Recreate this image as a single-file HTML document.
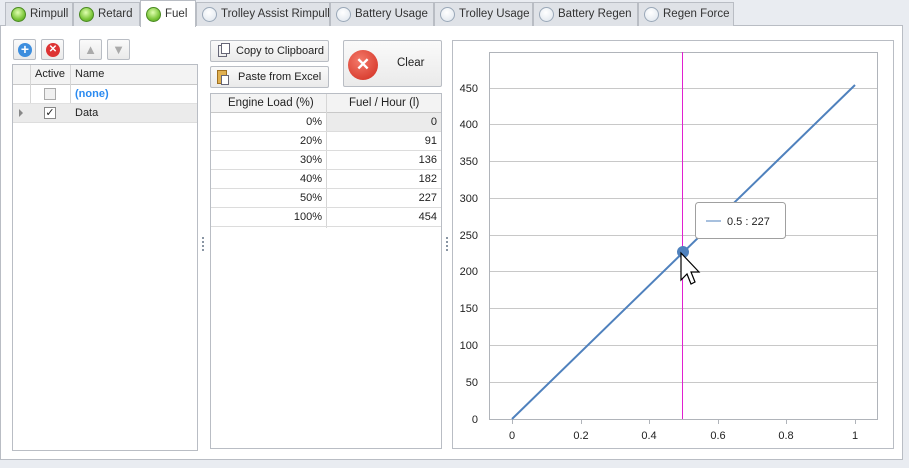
<!DOCTYPE html>
<html><head><style>
body{margin:0;width:909px;height:468px;background:#e9ecf1;font-family:"Liberation Sans",sans-serif;font-size:11px;color:#222;position:relative;overflow:hidden}
.a{position:absolute;box-sizing:border-box;white-space:nowrap}
.tab{position:absolute;top:2px;height:24px;background:#dfe2e7;border:1px solid #b9bdc4;border-bottom:none;line-height:23px;padding-left:24px;font-size:11.5px;color:#333;box-sizing:border-box;white-space:nowrap;overflow:hidden}
.tab i{position:absolute;left:5px;top:4px;width:15px;height:15px;border-radius:50%;border:1px solid #9aa8b8;background:radial-gradient(circle at 45% 35%,#fff,#dde4ec);box-sizing:border-box}
.tab i.g{border-color:#4a8a22;background:radial-gradient(circle at 45% 35%,#e0ffb0,#7cc63a 60%,#4c9a1e)}
.btn{position:absolute;border:1px solid #b9bdc4;border-radius:2px;background:linear-gradient(#fafafa,#eaeaea);box-sizing:border-box;white-space:nowrap}
.tr{position:absolute;left:0;width:100%;height:19px;border-bottom:1px solid #dcdcdc;box-sizing:border-box}
</style></head><body>
<div class="a" style="left:0;top:25px;width:903px;height:435px;background:#fff;border:1px solid #b9bdc4"></div>
<div class="tab" style="left:5px;width:68px"><i class="g"></i>Rimpull</div>
<div class="tab" style="left:73px;width:67px"><i class="g"></i>Retard</div>
<div class="tab" style="left:140px;width:56px;top:0;height:27px;background:#fff;line-height:27px"><i class="g" style="top:6px"></i>Fuel</div>
<div class="tab" style="left:196px;width:134px"><i></i>Trolley Assist Rimpull</div>
<div class="tab" style="left:330px;width:104px"><i></i>Battery Usage</div>
<div class="tab" style="left:434px;width:99px"><i></i>Trolley Usage</div>
<div class="tab" style="left:533px;width:105px"><i></i>Battery Regen</div>
<div class="tab" style="left:638px;width:96px"><i></i>Regen Force</div>

<!-- left toolbar -->
<div class="btn" style="left:13px;top:39px;width:23px;height:21px"><div class="a" style="left:4px;top:3px;width:14px;height:14px;border-radius:50%;background:#3d8ede;color:#fff;font-weight:bold;text-align:center;line-height:13px;font-size:14px">+</div></div>
<div class="btn" style="left:41px;top:39px;width:23px;height:21px"><div class="a" style="left:4px;top:3px;width:14px;height:14px;border-radius:50%;background:#d33;color:#fff;font-weight:bold;text-align:center;line-height:14px;font-size:10px">✕</div></div>
<div class="btn" style="left:79px;top:39px;width:23px;height:21px;color:#aaa;text-align:center;line-height:20px;font-size:13px">▲</div>
<div class="btn" style="left:107px;top:39px;width:23px;height:21px;color:#aaa;text-align:center;line-height:20px;font-size:13px">▼</div>

<!-- left grid -->
<div class="a" style="left:12px;top:64px;width:186px;height:387px;border:1px solid #b9bdc4;background:#fff">
 <div class="a" style="left:0;top:0;width:184px;height:20px;background:#f3f3f3;border-bottom:1px solid #c8c8c8"></div>
 <div class="a" style="left:17px;top:0;width:1px;height:57px;background:#d6d6d6"></div>
 <div class="a" style="left:57px;top:0;width:1px;height:57px;background:#d6d6d6"></div>
 <div class="a" style="left:22px;top:3px">Active</div><div class="a" style="left:62px;top:3px">Name</div>
 <div class="a" style="left:0;top:20px;width:184px;height:19px;border-bottom:1px solid #e0e0e0"></div>
 <div class="a" style="left:31px;top:23px;width:12px;height:12px;border:1px solid #aaa;background:#f0f0f0"></div>
 <div class="a" style="left:62px;top:23px;color:#2a8af0;font-weight:bold">(none)</div>
 <div class="a" style="left:0;top:39px;width:184px;height:19px;background:#ebebeb;border-bottom:1px solid #ddd"></div>
 <div class="a" style="left:6px;top:44px;width:0;height:0;border-left:4px solid #888;border-top:4px solid transparent;border-bottom:4px solid transparent"></div>
 <div class="a" style="left:31px;top:42px;width:12px;height:12px;border:1px solid #888;background:#fff;font-size:11px;line-height:11px;text-align:center">✓</div>
 <div class="a" style="left:62px;top:42px">Data</div>
</div>
<div class="a" style="left:202px;top:237px;width:2px;height:14px;border-left:2px dotted #8a96a4"></div>

<!-- middle -->
<div class="btn" style="left:210px;top:40px;width:119px;height:22px;font-size:11px;line-height:20px;padding-left:25px">Copy to Clipboard<div class="a" style="left:7px;top:4px;width:9px;height:12px;border:1px solid #667"></div><div class="a" style="left:10px;top:2px;width:9px;height:11px;border:1px solid #667;background:#fff"></div></div>
<div class="btn" style="left:210px;top:66px;width:119px;height:22px;font-size:11px;line-height:20px;padding-left:27px">Paste from Excel<div class="a" style="left:6px;top:3px;width:10px;height:14px;background:#e0b050;border:1px solid #a07020"></div><div class="a" style="left:10px;top:8px;width:8px;height:10px;border:1px solid #667;background:#fff"></div></div>
<div class="btn" style="left:343px;top:40px;width:99px;height:47px;font-size:11.5px;line-height:45px;padding-left:53px">Clear<div class="a" style="left:4px;top:9px;width:30px;height:30px;border-radius:50%;background:radial-gradient(circle at 40% 35%,#f47a6a,#d02b1e);color:#fff;font-size:17px;font-weight:bold;line-height:30px;text-align:center">✕</div></div>
<div class="a" style="left:210px;top:93px;width:232px;height:356px;border:1px solid #b9bdc4;background:#fff">
 <div class="a" style="left:0;top:0;width:230px;height:19px;background:#f3f3f3;border-bottom:1px solid #c8c8c8"></div>
 <div class="a" style="left:115px;top:0;width:1px;height:134px;background:#d6d6d6"></div>
 <div class="a" style="left:17px;top:3px;font-size:11.5px">Engine Load (%)</div>
 <div class="a" style="left:138px;top:3px;font-size:11.5px">Fuel / Hour (l)</div>
 <div class="a" style="left:0;top:19px;width:230px;height:115px;font-size:11px">
  <div class="tr" style="top:0"><div class="a" style="left:116px;top:0;width:114px;height:18px;background:#ebebeb"></div><span class="a" style="right:119px;top:3px">0%</span><span class="a" style="right:4px;top:3px">0</span></div>
  <div class="tr" style="top:19px"><span class="a" style="right:119px;top:3px">20%</span><span class="a" style="right:4px;top:3px">91</span></div>
  <div class="tr" style="top:38px"><span class="a" style="right:119px;top:3px">30%</span><span class="a" style="right:4px;top:3px">136</span></div>
  <div class="tr" style="top:57px"><span class="a" style="right:119px;top:3px">40%</span><span class="a" style="right:4px;top:3px">182</span></div>
  <div class="tr" style="top:76px"><span class="a" style="right:119px;top:3px">50%</span><span class="a" style="right:4px;top:3px">227</span></div>
  <div class="tr" style="top:95px"><span class="a" style="right:119px;top:3px">100%</span><span class="a" style="right:4px;top:3px">454</span></div>
 </div>
</div>
<div class="a" style="left:446px;top:237px;width:2px;height:14px;border-left:2px dotted #8a96a4"></div>

<!-- chart -->
<div class="a" style="left:452px;top:40px;width:442px;height:409px;border:1px solid #b9bdc4;background:#fff"></div>
<svg class="a" style="left:0;top:0" width="909" height="468" font-family="Liberation Sans" font-size="11" fill="#222">
<g stroke="#c8c8c8" stroke-width="1">
<line x1="489" x2="877" y1="382.5" y2="382.5"/><line x1="489" x2="877" y1="345.5" y2="345.5"/><line x1="489" x2="877" y1="308.5" y2="308.5"/><line x1="489" x2="877" y1="271.5" y2="271.5"/><line x1="489" x2="877" y1="235.5" y2="235.5"/><line x1="489" x2="877" y1="198.5" y2="198.5"/><line x1="489" x2="877" y1="161.5" y2="161.5"/><line x1="489" x2="877" y1="124.5" y2="124.5"/><line x1="489" x2="877" y1="88.5" y2="88.5"/>
</g>
<rect x="489.5" y="52.5" width="388" height="367" fill="none" stroke="#b0b4ba"/>
<g text-anchor="end"><text x="478" y="423">0</text><text x="478" y="386">50</text><text x="478" y="349">100</text><text x="478" y="312">150</text><text x="478" y="275">200</text><text x="478" y="239">250</text><text x="478" y="202">300</text><text x="478" y="165">350</text><text x="478" y="128">400</text><text x="478" y="92">450</text></g>
<g text-anchor="middle"><text x="512" y="439">0</text><text x="581" y="439">0.2</text><text x="649" y="439">0.4</text><text x="718" y="439">0.6</text><text x="786" y="439">0.8</text><text x="855" y="439">1</text></g>
<g stroke="#b0b4ba"><line x1="512.5" x2="512.5" y1="419" y2="424"/><line x1="581.5" x2="581.5" y1="419" y2="424"/><line x1="649.5" x2="649.5" y1="419" y2="424"/><line x1="718.5" x2="718.5" y1="419" y2="424"/><line x1="786.5" x2="786.5" y1="419" y2="424"/><line x1="855.5" x2="855.5" y1="419" y2="424"/></g>
<line x1="682.5" x2="682.5" y1="52" y2="419" stroke="#e020d0"/>
<line x1="512" y1="419" x2="855" y2="85" stroke="#4f81bd" stroke-width="2"/>
<circle cx="683" cy="252" r="6" fill="#4f81bd"/>
<rect x="695.5" y="202.5" width="90" height="36" rx="3" fill="#fff" stroke="#a0a0a0"/>
<line x1="706" x2="721" y1="221" y2="221" stroke="#4f81bd"/>
<text x="727" y="225">0.5 : 227</text>
<path d="M681 253 L681 280 L687 274 L691 284 L695 282 L691 272 L699 272 Z" fill="#fff" stroke="#000" stroke-width="1.2"/>
</svg>
</body></html>
